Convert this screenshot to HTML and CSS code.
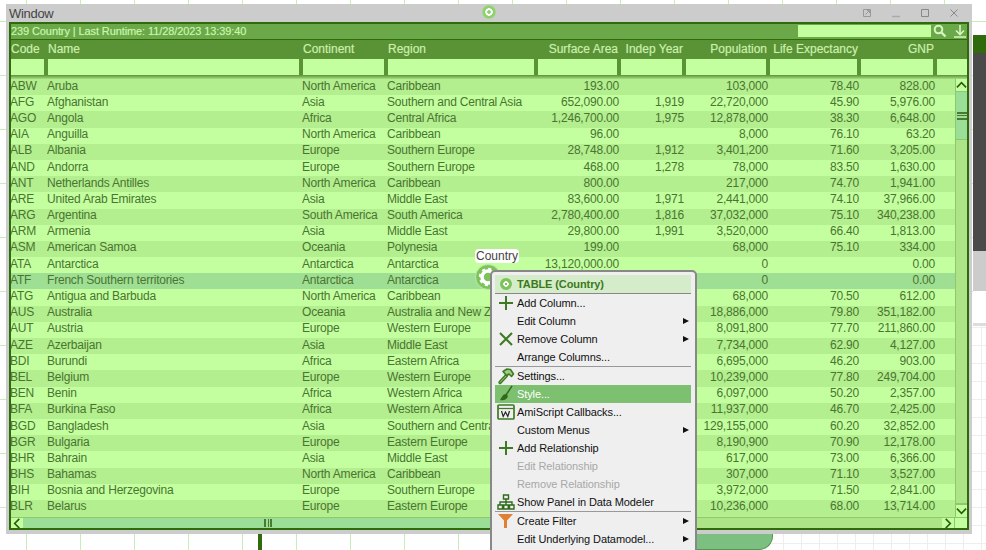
FILE: index.html
```html
<!DOCTYPE html>
<html lang="en">
<head>
    <meta charset="UTF-8">
    <title>Window - Country</title>
    <link rel="stylesheet" href="styles.css">
</head>
<body>
    <div class="canvas">
        <div class="fine-grid"></div>
        <div class="side-panel">
            <div class="side-green"></div>
            <div class="side-dark"></div>
            <div class="side-gray"></div>
            <div class="side-gap"></div>
            <div class="side-strip"></div>
        </div>

        <div class="window">
            <div class="title-bar">
                <span class="title-text">Window</span>
                <span class="title-gear"></span>
                <div class="title-btns">
                    <svg width="10" height="10" viewBox="0 0 10 10"><path d="M1.500 1.500h7v7h-7z M3.500 6.500l4-4 M5 2.500h2.500v2.500" fill="none" stroke="#999"/></svg>
                    <svg width="10" height="10" viewBox="0 0 10 10"><path d="M1 8.500h8" stroke="#aaa" stroke-width="1.500"/></svg>
                    <svg width="10" height="10" viewBox="0 0 10 10"><path d="M1.500 1.500h7v7h-7z" fill="none" stroke="#888"/></svg>
                    <svg width="10" height="10" viewBox="0 0 10 10"><path d="M1.500 1.500l7 7M8.500 1.500l-7 7" stroke="#888"/></svg>
                </div>
            </div>
            <div class="table-box">
                <div class="status-bar">
                    <span class="status-text">239 Country | Last Runtime: 11/28/2023 13:39:40</span>
                    <span class="search-box"></span>
                    <svg class="search-icon" width="14" height="14" viewBox="0 0 14 14"><circle cx="5.500" cy="5.500" r="3.800" fill="none" stroke="#d6f5c0" stroke-width="2"/><path d="M8.500 8.500l4 4" stroke="#d6f5c0" stroke-width="2.400"/></svg>
                    <svg class="download-icon" width="14" height="14" viewBox="0 0 14 14"><path d="M7 1v9M3 6.500l4 4 4-4M1 13h12" fill="none" stroke="#d6f5c0" stroke-width="1.600"/></svg>
                </div>
                <div class="head-row" id="headRow"></div>
                <div class="filter-row" id="filterRow"></div>
                <div class="table-body">
                    <div class="rows" id="rows"></div>
                    <div class="vscroll">
                        <div class="arrow-btn">
                            <svg width="12" height="8" viewBox="0 0 12 8"><path d="M1 6.500l5-5 5 5" fill="none" stroke="#2b5a10" stroke-width="1.800"/></svg>
                        </div>
                        <div class="vthumb"><span class="grip"></span></div>
                        <div class="vtrack"></div>
                        <div class="arrow-btn arrow-bottom">
                            <svg width="12" height="8" viewBox="0 0 12 8"><path d="M1 1.500l5 5 5-5" fill="none" stroke="#2b5a10" stroke-width="1.800"/></svg>
                        </div>
                    </div>
                </div>
                <div class="hscroll">
                    <div class="harrow">
                        <svg width="8" height="11" viewBox="0 0 8 12"><path d="M6.500 1l-5 5 5 5" fill="none" stroke="#2b5a10" stroke-width="1.800"/></svg>
                    </div>
                    <div class="hthumb"><span class="hgrip"></span></div>
                    <div class="harrow">
                        <svg width="8" height="11" viewBox="0 0 8 12"><path d="M1.500 1l5 5-5 5" fill="none" stroke="#2b5a10" stroke-width="1.800"/></svg>
                    </div>
                    <div class="hcorner"></div>
                </div>
            </div>
        </div>

        <div class="below-bar"></div>
        <div class="below-pill"></div>

        <span class="tip-label">Country</span>
        <div class="float-gear">
            <svg width="20" height="20" viewBox="0 0 20 20"><circle cx="10" cy="10" r="6" fill="none" stroke="#fff" stroke-width="3.500"/><circle cx="10" cy="10" r="8" fill="none" stroke="#fff" stroke-width="2.500" stroke-dasharray="3 3.280"/></svg>
        </div>

        <div class="menu" id="menu">
            <div class="menu-head">
                <span class="head-gear"></span>
                <span>TABLE (Country)</span>
            </div>
            <div class="menu-group">
                <div class="menu-item">
                    <svg class="mi" width="18" height="18" viewBox="0 0 18 18"><path d="M9 2v14M2 9h14" stroke="#3d7a22" stroke-width="2"/></svg>
                    Add Column...
                </div>
                <div class="menu-item sub">Edit Column</div>
                <div class="menu-item sub">
                    <svg class="mi" width="18" height="18" viewBox="0 0 18 18"><path d="M3 3l12 12M15 3L3 15" stroke="#3d7a22" stroke-width="2"/></svg>
                    Remove Column
                </div>
                <div class="menu-item">Arrange Columns...</div>
            </div>
            <div class="menu-group">
                <div class="menu-item">
                    <svg class="mi" width="18" height="18" viewBox="0 0 18 18"><path d="M3 15.500L9.500 8.500" stroke="#3d7a22" stroke-width="3.400" stroke-linecap="round"/><path d="M3 15.500L9.500 8.500" stroke="#9ccb84" stroke-width="1"/><path d="M6 4.500L10 2l3.500.5 3 4.500-2 2.500-2.500-2.500-2.500 1.500z" fill="#9ccb84" stroke="#3d7a22" stroke-width="1.500" stroke-linejoin="round"/></svg>
                    Settings...
                </div>
                <div class="menu-item active">
                    <svg class="mi" width="18" height="18" viewBox="0 0 18 18"><path d="M15 1L9 10" stroke="#2f6b1a" stroke-width="1.500"/><path d="M9 9c-3 0-4 3-6 6 3 1 7 0 8-4z" fill="#2f6b1a"/></svg>
                    Style...
                </div>
                <div class="menu-item">
                    <svg class="mi" width="18" height="18" viewBox="0 0 18 18"><rect x="1" y="2" width="16" height="14" rx="1" fill="none" stroke="#3d7a22" stroke-width="1.700"/><path d="M1.500 5.500h15" stroke="#3d7a22" stroke-width="1.200"/><path d="M4.500 8l1.700 5.500 2.300-4.500 2.300 4.500L12.500 8" fill="none" stroke="#222" stroke-width="1.200"/></svg>
                    AmiScript Callbacks...
                </div>
                <div class="menu-item sub">Custom Menus</div>
                <div class="menu-item">
                    <svg class="mi" width="18" height="18" viewBox="0 0 18 18"><path d="M9 2v14M2 9h14" stroke="#3d7a22" stroke-width="2"/></svg>
                    Add Relationship
                </div>
                <div class="menu-item disabled">Edit Relationship</div>
                <div class="menu-item disabled">Remove Relationship</div>
                <div class="menu-item">
                    <svg class="mi" width="18" height="18" viewBox="0 0 18 18"><path d="M6.500 2h5v4h-5zM1 12h4.500v4H1zM6.750 12h4.500v4h-4.500zM12.500 12H17v4h-4.500z" fill="none" stroke="#2f6b1a" stroke-width="1.400"/><path d="M9 6v6M3 12V9h12v3" fill="none" stroke="#2f6b1a" stroke-width="1.400"/></svg>
                    Show Panel in Data Modeler
                </div>
            </div>
            <div class="menu-group">
                <div class="menu-item sub">
                    <svg class="mi" width="18" height="18" viewBox="0 0 18 18"><path d="M1 2h15l-6 6.500V16H7V8.500z" fill="#e08030"/></svg>
                    Create Filter
                </div>
                <div class="menu-item sub">Edit Underlying Datamodel...</div>
            </div>
        </div>
    </div>
    <script src="table.js"></script>
</body>
</html>
```

FILE: styles.css
```css
* {
    box-sizing: border-box;
}
body {
    margin: 0;
    overflow: hidden;
    background: #ffffff;
    font-family: "Liberation Sans", Arial, sans-serif;
}
.canvas {
    position: relative;
    width: 986px;
    height: 550px;
    overflow: hidden;
    background-color: #ffffff;
    background-image:
        linear-gradient(to right, #c8eeb8 1px, transparent 1px),
        linear-gradient(to bottom, #c8eeb8 1px, transparent 1px);
    background-size: 54px 54px;
    background-position: 26px 21px;
}
.fine-grid {
    position: absolute;
    left: 700px;
    top: 326px;
    width: 286px;
    height: 224px;
    background-color: #ffffff;
    background-image:
        linear-gradient(to right, #eeeeee 1px, transparent 1px),
        linear-gradient(to bottom, #eeeeee 1px, transparent 1px);
    background-size: 18px 18px;
    background-position: 11px 1px;
}
.side-panel {
    position: absolute;
    left: 973px;
    top: 35px;
    width: 13px;
    display: flex;
    flex-direction: column;
}
.side-green {
    height: 18px;
    background: #2f6b0a;
}
.side-dark {
    height: 198px;
    background: #4a4a4a;
}
.side-gray {
    height: 40px;
    background: #cccccc;
}
.side-gap {
    height: 32px;
    background: #ffffff;
}
.side-strip {
    height: 3px;
    background: #dddddd;
}

/* window */
.window {
    position: absolute;
    left: 6px;
    top: 4px;
    width: 966px;
    height: 530px;
    background: #cccccc;
    padding: 0 3px 4px 3px;
    display: flex;
    flex-direction: column;
}
.title-bar {
    height: 18px;
    display: flex;
    align-items: center;
    position: relative;
    flex-shrink: 0;
}
.title-text {
    font-size: 13px;
    letter-spacing: -0.3px;
    color: #444;
}
.title-gear {
    position: absolute;
    left: 473px;
    top: 1px;
    width: 14px;
    height: 14px;
    border-radius: 50%;
    background: radial-gradient(circle, #8fd16f 0 1.500px, #ffffff 2px 3.500px, #8fd16f 4px 6px, #a6e08c 7px);
}
.title-btns {
    position: absolute;
    right: 0;
    top: 4px;
    display: flex;
    gap: 19px;
    padding-right: 10px;
}
.title-btns svg {
    display: block;
}

/* table */
.table-box {
    flex: 1;
    min-height: 0;
    border: 2px solid #2f6b0a;
    background: #b9f08f;
    display: flex;
    flex-direction: column;
    overflow: hidden;
}
.status-bar {
    height: 16px;
    flex-shrink: 0;
    background: #6aa84a;
    border-bottom: 1px solid #2f6b0a;
    padding-bottom: 2px;
    display: flex;
    align-items: center;
    color: #c8f7a8;
    font-size: 11px;
    letter-spacing: -0.1px;
    text-shadow: 0 0 1px rgba(200, 247, 168, 0.5);
}
.status-text {
    flex: 1;
}
.search-box {
    width: 133px;
    height: 12px;
    background: #c3ff9f;
}
.search-icon {
    margin: 0 6px 0 2px;
}
.download-icon {
    margin: 0;
}
.head-row {
    height: 19px;
    flex-shrink: 0;
    background: #5a9236;
    display: flex;
    color: #c8f0a8;
    font-size: 12px;
    text-shadow: 0 0 1px rgba(200, 240, 168, 0.5);
    align-items: center;
    padding-bottom: 2px;
}
.head-cell {
    flex-shrink: 0;
    padding-right: 3px;
    white-space: nowrap;
}
.filter-row {
    height: 20px;
    flex-shrink: 0;
    background: linear-gradient(#5a9236 16px, #a9de84);
    display: flex;
    padding-bottom: 4px;
}
.filter-cell {
    flex-shrink: 0;
    padding-right: 4px;
}
.filter-cell:last-child {
    padding-right: 0;
}
.filter-cell span {
    display: block;
    height: 16px;
    background: #c3ff9f;
}
.table-body {
    flex: 1;
    min-height: 0;
    display: flex;
    overflow: hidden;
}
.rows {
    flex: 1;
    min-width: 0;
    overflow: hidden;
}
.row {
    display: flex;
    height: 16.200px;
    margin-left: -1px;
    padding-bottom: 3px;
    align-items: center;
    background: #c3ff9f;
    color: #4a7530;
    font-size: 12px;
    letter-spacing: -0.2px;
    white-space: nowrap;
}
.row.odd {
    background: #b3ee8f;
}
.row.selected {
    background: #9fdf94;
}
.cell {
    flex-shrink: 0;
    overflow: hidden;
    padding: 0 1px 0 0;
}
.cell.num {
    text-align: right;
}

/* scrollbars */
.vscroll {
    width: 12px;
    flex-shrink: 0;
    display: flex;
    flex-direction: column;
    background: #ade487;
    border-left: 1px solid #8cc86c;
}
.arrow-btn {
    height: 13px;
    flex-shrink: 0;
    background: #c3ff9f;
    border-bottom: 1px solid #8cc86c;
    display: flex;
    align-items: center;
    justify-content: center;
}
.arrow-bottom {
    height: 14px;
    border-bottom: 0;
    border-top: 2px solid #8cc86c;
}
.vthumb {
    height: 48px;
    flex-shrink: 0;
    background: #9ade98;
    display: flex;
    align-items: center;
    justify-content: center;
    border-bottom: 1px solid #8cc86c;
}
.grip {
    display: block;
    width: 10px;
    height: 8px;
    border-top: 2px solid #4a7a30;
    border-bottom: 2px solid #4a7a30;
    background: linear-gradient(#4a7a30, #4a7a30) center / 100% 1px no-repeat;
}
.vtrack {
    flex: 1;
}
.hscroll {
    height: 11px;
    flex-shrink: 0;
    display: flex;
    background: #ade487;
    border-top: 1px solid #8cc86c;
}
.harrow {
    width: 12px;
    flex-shrink: 0;
    display: flex;
    align-items: center;
    justify-content: center;
    background: #c3ff9f;
}
.hthumb {
    width: 490px;
    background: #9ade98;
    display: flex;
    align-items: center;
    justify-content: center;
    margin-right: auto;
}
.hgrip {
    display: block;
    width: 8px;
    height: 8px;
    border-left: 2px solid #4a7a30;
    border-right: 2px solid #4a7a30;
    background: linear-gradient(#4a7a30, #4a7a30) center / 1px 100% no-repeat;
}
.hcorner {
    width: 13px;
    background: #c3ff9f;
    border-left: 1px solid #8cc86c;
}

/* bits below the window */
.below-bar {
    position: absolute;
    left: 258px;
    top: 534px;
    width: 4px;
    height: 16px;
    background: #2f6b0a;
}
.below-pill {
    position: absolute;
    left: 640px;
    top: 534px;
    width: 133px;
    height: 16px;
    background: #7dbf80;
    border: 1px solid #4f9a50;
    border-top: 0;
    border-radius: 0 0 14px 0;
}

/* floating bits */
.tip-label {
    position: absolute;
    left: 475px;
    top: 249px;
    font-size: 12px;
    color: #444;
    background: #fff;
    border-radius: 4px;
    padding: 0 1px;
    line-height: 14px;
}
.float-gear {
    position: absolute;
    left: 475px;
    top: 264px;
    width: 26px;
    height: 26px;
    border-radius: 50%;
    background: #7cc45a;
    border: 1px solid #c3e8b0;
    display: flex;
    align-items: center;
    justify-content: center;
}

/* context menu */
.menu {
    position: absolute;
    left: 490px;
    top: 270px;
    width: 207px;
    height: 290px;
    background: #efefef;
    border: 2px solid #888;
    border-radius: 5px;
    padding: 3px 4px 3px 3px;
    font-size: 11px;
    letter-spacing: -0.1px;
    color: #111;
}
.menu-head {
    height: 19px;
    background: #d4ecca;
    color: #3b7a1a;
    font-weight: bold;
    display: flex;
    align-items: center;
    gap: 5px;
    padding-left: 5px;
    border-bottom: 1px solid #888;
}
.head-gear {
    width: 12px;
    height: 12px;
    border-radius: 50%;
    background: radial-gradient(circle, #7cc45a 0 1px, #ffffff 1.500px 2.500px, #7cc45a 3px);
}
.menu-group {
    border-bottom: 1px solid #999;
}
.menu-group:last-child {
    border-bottom: 0;
}
.menu-item {
    height: 18px;
    display: flex;
    align-items: center;
    padding-left: 22px;
    position: relative;
}
.mi {
    position: absolute;
    left: 2px;
    top: 0;
}
.menu-item.sub::after {
    content: "";
    position: absolute;
    right: 2px;
    top: 6px;
    border-left: 6px solid #111;
    border-top: 3px solid transparent;
    border-bottom: 3px solid transparent;
}
.menu-item.active {
    background: #7cc070;
    color: #fff;
}
.menu-item.disabled {
    color: #a8a8a8;
}
```

FILE: table.js
```js
// column widths and alignment, in the order they show up
const columns = [
    { name: 'Code', width: 37 },
    { name: 'Name', width: 255 },
    { name: 'Continent', width: 85 },
    { name: 'Region', width: 150 },
    { name: 'Surface Area', width: 83, num: true },
    { name: 'Indep Year', width: 65, num: true },
    { name: 'Population', width: 84, num: true },
    { name: 'Life Expectancy', width: 91, num: true },
    { name: 'GNP', width: 76, num: true },
    { name: '', width: 30 }
];

const data = [
    ['ABW', 'Aruba', 'North America', 'Caribbean', '193.00', '', '103,000', '78.40', '828.00'],
    ['AFG', 'Afghanistan', 'Asia', 'Southern and Central Asia', '652,090.00', '1,919', '22,720,000', '45.90', '5,976.00'],
    ['AGO', 'Angola', 'Africa', 'Central Africa', '1,246,700.00', '1,975', '12,878,000', '38.30', '6,648.00'],
    ['AIA', 'Anguilla', 'North America', 'Caribbean', '96.00', '', '8,000', '76.10', '63.20'],
    ['ALB', 'Albania', 'Europe', 'Southern Europe', '28,748.00', '1,912', '3,401,200', '71.60', '3,205.00'],
    ['AND', 'Andorra', 'Europe', 'Southern Europe', '468.00', '1,278', '78,000', '83.50', '1,630.00'],
    ['ANT', 'Netherlands Antilles', 'North America', 'Caribbean', '800.00', '', '217,000', '74.70', '1,941.00'],
    ['ARE', 'United Arab Emirates', 'Asia', 'Middle East', '83,600.00', '1,971', '2,441,000', '74.10', '37,966.00'],
    ['ARG', 'Argentina', 'South America', 'South America', '2,780,400.00', '1,816', '37,032,000', '75.10', '340,238.00'],
    ['ARM', 'Armenia', 'Asia', 'Middle East', '29,800.00', '1,991', '3,520,000', '66.40', '1,813.00'],
    ['ASM', 'American Samoa', 'Oceania', 'Polynesia', '199.00', '', '68,000', '75.10', '334.00'],
    ['ATA', 'Antarctica', 'Antarctica', 'Antarctica', '13,120,000.00', '', '0', '', '0.00'],
    ['ATF', 'French Southern territories', 'Antarctica', 'Antarctica', '', '', '0', '', '0.00'],
    ['ATG', 'Antigua and Barbuda', 'North America', 'Caribbean', '', '', '68,000', '70.50', '612.00'],
    ['AUS', 'Australia', 'Oceania', 'Australia and New Zealand', '', '', '18,886,000', '79.80', '351,182.00'],
    ['AUT', 'Austria', 'Europe', 'Western Europe', '', '', '8,091,800', '77.70', '211,860.00'],
    ['AZE', 'Azerbaijan', 'Asia', 'Middle East', '', '', '7,734,000', '62.90', '4,127.00'],
    ['BDI', 'Burundi', 'Africa', 'Eastern Africa', '', '', '6,695,000', '46.20', '903.00'],
    ['BEL', 'Belgium', 'Europe', 'Western Europe', '', '', '10,239,000', '77.80', '249,704.00'],
    ['BEN', 'Benin', 'Africa', 'Western Africa', '', '', '6,097,000', '50.20', '2,357.00'],
    ['BFA', 'Burkina Faso', 'Africa', 'Western Africa', '', '', '11,937,000', '46.70', '2,425.00'],
    ['BGD', 'Bangladesh', 'Asia', 'Southern and Central Asia', '', '', '129,155,000', '60.20', '32,852.00'],
    ['BGR', 'Bulgaria', 'Europe', 'Eastern Europe', '', '', '8,190,900', '70.90', '12,178.00'],
    ['BHR', 'Bahrain', 'Asia', 'Middle East', '', '', '617,000', '73.00', '6,366.00'],
    ['BHS', 'Bahamas', 'North America', 'Caribbean', '', '', '307,000', '71.10', '3,527.00'],
    ['BIH', 'Bosnia and Herzegovina', 'Europe', 'Southern Europe', '', '', '3,972,000', '71.50', '2,841.00'],
    ['BLR', 'Belarus', 'Europe', 'Eastern Europe', '', '', '10,236,000', '68.00', '13,714.00']
];

function buildHeader() {
    const head = document.getElementById('headRow');
    const filter = document.getElementById('filterRow');
    columns.forEach(col => {
        const cell = document.createElement('div');
        cell.className = 'head-cell';
        cell.style.width = col.width + 'px';
        cell.style.textAlign = col.num ? 'right' : 'left';
        cell.textContent = col.name;
        head.appendChild(cell);

        const box = document.createElement('div');
        box.className = 'filter-cell';
        box.style.width = col.width + 'px';
        box.appendChild(document.createElement('span'));
        filter.appendChild(box);
    });
}

function buildRows() {
    const rows = document.getElementById('rows');
    data.forEach((record, i) => {
        const row = document.createElement('div');
        row.className = 'row' + (i % 2 === 0 ? ' odd' : '');
        if (record[0] === 'ATF') row.classList.add('selected');
        record.forEach((value, c) => {
            const col = columns[c];
            const cell = document.createElement('div');
            cell.className = col.num ? 'cell num' : 'cell';
            cell.style.width = col.width + 'px';
            cell.textContent = value;
            row.appendChild(cell);
        });
        rows.appendChild(row);
    });
}

buildHeader();
buildRows();
```
